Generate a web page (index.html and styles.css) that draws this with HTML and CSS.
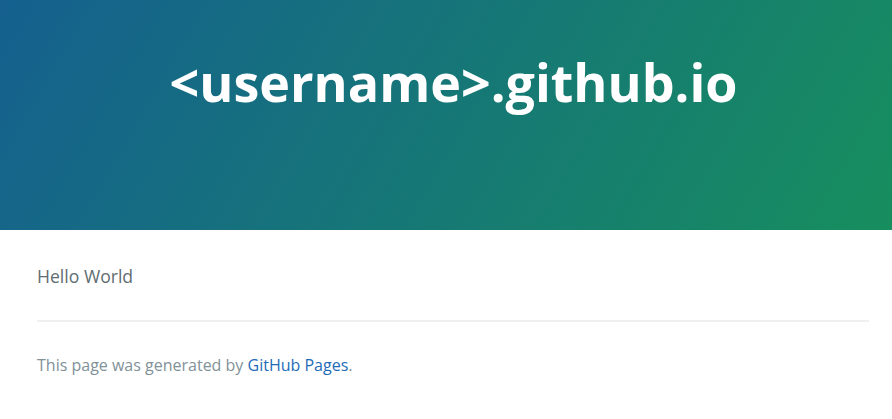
FILE: index.html
```html
<!DOCTYPE html>
<html>
<head>
<meta charset="utf-8">
<link rel="stylesheet" href="styles.css">
</head>
<body>
<header class="page-header">
  <h1 class="project-name">&lt;username&gt;.github.io</h1>
</header>
<main class="main-content">
  <p class="hello">Hello World</p>
  <footer class="site-footer">
    <span class="credits">This page was generated by <a href="#">GitHub Pages</a>.</span>
  </footer>
</main>
</body>
</html>
```
FILE: styles.css
```css
* { box-sizing: border-box; }
html, body { margin: 0; padding: 0; }
body {
  font-family: "Open Sans", "Helvetica Neue", Arial, sans-serif;
  font-size: 16px;
  line-height: 1.5;
  color: #606c71;
  background: #fff;
}
.page-header {
  height: 230px;
  padding-top: 48px;
  padding-left: 15px;
  text-align: center;
  color: #fff;
  background-color: #178e5e;
  background-image: linear-gradient(120deg, #15608f, #178e5e);
}
.project-name {
  margin: 0;
  font-size: 52px;
  font-weight: 700;
  line-height: 68px;
}
.main-content {
  padding: 31px 23px 0 37px;
}
.hello {
  margin: 0;
  font-size: 17.6px;
  line-height: 30px;
}
.site-footer {
  margin-top: 29px;
  padding-top: 31px;
  border-top: 2px solid #eff0f1;
}
.credits {
  font-size: 16px;
  color: #819198;
}
.credits a {
  color: #1e6bb8;
  text-decoration: none;
}
```
